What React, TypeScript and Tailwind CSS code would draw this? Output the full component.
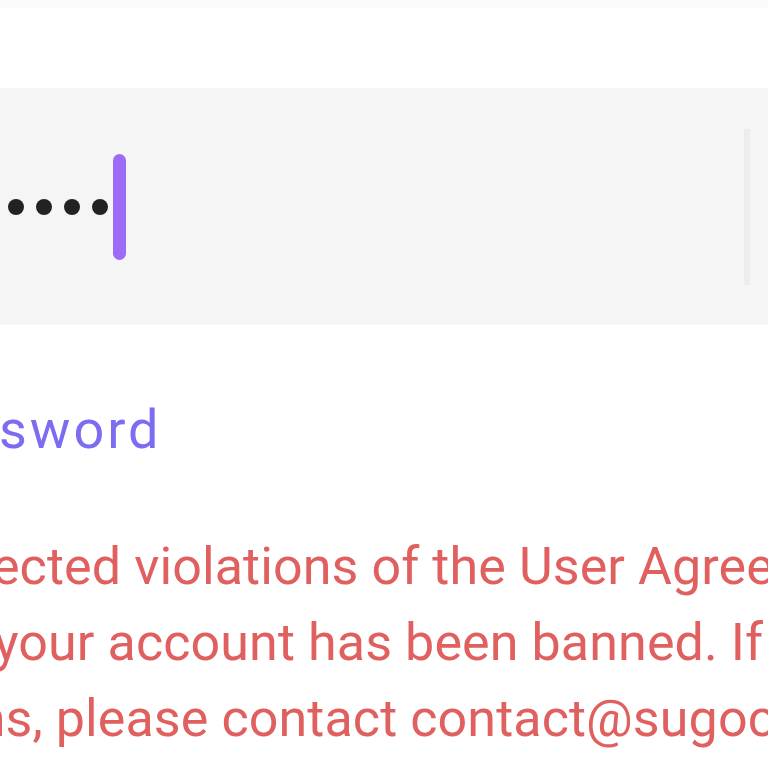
export default function App() {
  return (
    <div className="w-[768px] h-[768px] overflow-hidden bg-white font-['Roboto','Liberation_Sans',sans-serif]">
      <div className="h-[8px] bg-[#fafafa]" />
      <div className="h-[80px]" />

      {/* password field */}
      <div className="h-[237px] bg-[#f5f5f5] flex items-center">
        <div className="flex items-center gap-[12px] ml-[8px]">
          <span className="w-[16px] h-[16px] rounded-full bg-[#222]" />
          <span className="w-[16px] h-[16px] rounded-full bg-[#222]" />
          <span className="w-[16px] h-[16px] rounded-full bg-[#222]" />
          <span className="w-[16px] h-[16px] rounded-full bg-[#222]" />
        </div>
        <span className="ml-[5px] w-[13px] h-[106px] rounded-full bg-[#9d6bf6]" />
        <div className="flex-1" />
        <span className="mr-[18px] w-[6px] h-[156px] bg-[#ededed]" />
      </div>

      <div className="mt-[74px] whitespace-nowrap text-[54px] leading-[62px] tracking-[3px] text-[#7b6cf2] -ml-[1px]">
        sword
      </div>

      <div className="mt-[68px] whitespace-nowrap text-[52px] leading-[76px] tracking-[0.1px] text-[#e0605f]">
        <div className="-ml-[120px]">suspected violations of the User Agreement,</div>
        <div className="-ml-[6px]">your account has been banned. If you have</div>
        <div className="-ml-[196px]">questions, please contact contact@sugoclub.com</div>
      </div>
    </div>
  );
}
